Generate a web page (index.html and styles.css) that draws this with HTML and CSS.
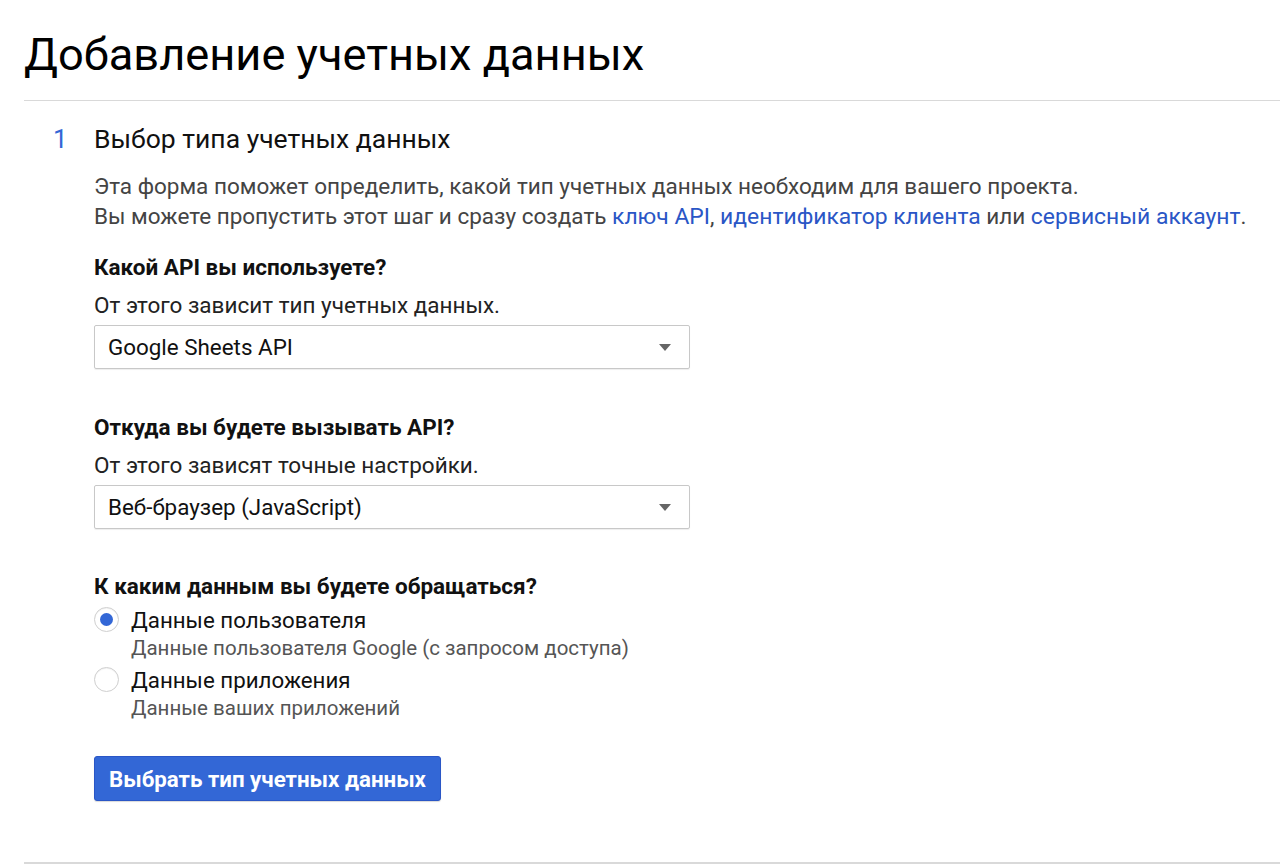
FILE: index.html
```html
<!DOCTYPE html>
<html lang="ru">
<head>
<meta charset="utf-8">
<link rel="stylesheet" href="styles.css">
</head>
<body>
<div class="page">
  <h1 class="title">Добавление учетных данных</h1>
  <div class="step">
    <div class="step-head">
      <span class="step-num">1</span>
      <span class="step-title">Выбор типа учетных данных</span>
    </div>
    <div class="step-body">
      <p class="intro">Эта форма поможет определить, какой тип учетных данных необходим для вашего проекта.<br>Вы можете пропустить этот шаг и сразу создать <a href="#">ключ API</a>, <a href="#">идентификатор клиента</a> или <a href="#">сервисный аккаунт</a>.</p>

      <div class="field first">
        <div class="label">Какой API вы используете?</div>
        <div class="hint">От этого зависит тип учетных данных.</div>
        <div class="select"><span>Google Sheets API</span><span class="caret"></span></div>
      </div>

      <div class="field">
        <div class="label">Откуда вы будете вызывать API?</div>
        <div class="hint">От этого зависят точные настройки.</div>
        <div class="select"><span>Веб-браузер (JavaScript)</span><span class="caret"></span></div>
      </div>

      <div class="field radios">
        <div class="label">К каким данным вы будете обращаться?</div>
        <div class="radio-row">
          <span class="radio checked"></span>
          <div class="radio-text">
            <div class="radio-label">Данные пользователя</div>
            <div class="radio-sub">Данные пользователя Google (с запросом доступа)</div>
          </div>
        </div>
        <div class="radio-row">
          <span class="radio"></span>
          <div class="radio-text">
            <div class="radio-label">Данные приложения</div>
            <div class="radio-sub">Данные ваших приложений</div>
          </div>
        </div>
      </div>

      <button class="btn">Выбрать тип учетных данных</button>
    </div>
  </div>
</div>
</body>
</html>
```
FILE: styles.css
```css
* { box-sizing: border-box; }
html, body { margin: 0; padding: 0; background: #fff; }
body {
  font-family: Roboto, "Liberation Sans", Arial, sans-serif;
  color: #212121;
  overflow: hidden;
  height: 864px;
}
.page {
  padding-left: 24px;
}
.title {
  margin: 0;
  padding-top: 27px;
  height: 101px;
  font-size: 45.2px;
  font-weight: 400;
  color: #000;
  line-height: 56px;
  border-bottom: 1px solid #d9d9d9;
}
.step {
  padding-left: 29px;
  height: 763px;
  border-bottom: 2px solid #d9d9d9;
}
.step-head {
  display: flex;
  align-items: baseline;
  padding-top: 23px;
  line-height: 30px;
}
.step-num {
  width: 41px;
  font-size: 26px;
  color: #3367d6;
}
.step-title {
  font-size: 26.5px;
  color: #111;
}
.step-body {
  padding-left: 41px;
}
.intro {
  margin: 17px 0 0;
  font-size: 22.5px;
  line-height: 30px;
  color: #444;
}
.intro a { color: #2a56c6; text-decoration: none; font-size: 22.9px; }
.field { margin-top: 44px; }
.field.first { margin-top: 21px; }
.label {
  font-size: 22.5px;
  font-weight: 700;
  color: #111;
  line-height: 28px;
}
.hint {
  margin-top: 10px;
  font-size: 22.5px;
  line-height: 28px;
  color: #222;
}
.select {
  margin-top: 6px;
  width: 596px;
  height: 44px;
  border: 1px solid #c8c8c8;
  border-radius: 2px;
  box-shadow: 0 1px 1px rgba(0,0,0,0.07);
  display: flex;
  align-items: center;
  justify-content: space-between;
  padding: 0 18px 0 13px;
  font-size: 22.4px;
  color: #111;
}
.caret {
  width: 0; height: 0;
  border-left: 6px solid transparent;
  border-right: 6px solid transparent;
  border-top: 7px solid #666;
}
.radios { margin-top: 43px; }
.radios .label { margin-bottom: 6px; }
.radio-row {
  display: flex;
  align-items: flex-start;
  margin-bottom: 4px;
}
.radio {
  flex: none;
  width: 25px; height: 25px;
  border-radius: 50%;
  border: 1px solid #cfcfcf;
  background: #fff;
  margin-top: 1px;
  margin-right: 12px;
  position: relative;
  box-shadow: inset 0 1px 1px rgba(0,0,0,0.05);
}
.radio.checked::after {
  content: "";
  position: absolute;
  left: 5px; top: 5px;
  width: 13px; height: 13px;
  border-radius: 50%;
  background: #3367d6;
}
.radio-label { font-size: 22.3px; line-height: 28px; color: #111; }
.radio-sub { font-size: 20.5px; line-height: 28px; color: #555; }
.btn {
  display: block;
  margin-top: 34px;
  width: 347px;
  height: 45px;
  background: #3367d6;
  border: 1px solid #2a56c6;
  border-radius: 3px;
  color: #fff;
  font-family: Roboto, "Liberation Sans", Arial, sans-serif;
  font-size: 22.3px;
  font-weight: 700;
  padding: 0;
  box-shadow: 0 1px 1px rgba(0,0,0,0.15);
}
```
